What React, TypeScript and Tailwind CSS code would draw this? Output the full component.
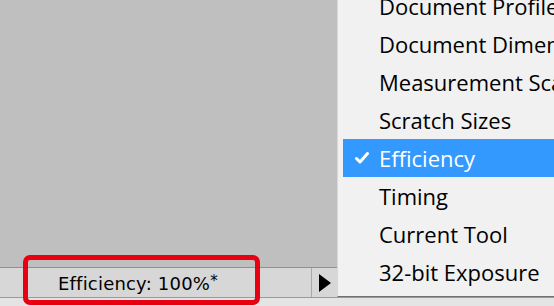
import React from "react";

const items = [
  "Document Profile",
  "Document Dimensions",
  "Measurement Scale",
  "Scratch Sizes",
  "Efficiency",
  "Timing",
  "Current Tool",
  "32-bit Exposure",
];

export default function App() {
  return (
    <div className="relative w-[554px] h-[306px] overflow-hidden bg-[#bfbfbf] flex flex-col">
      <div className="flex-1" />
      <div className="h-[30px] border-t border-[#8f8f8f] bg-[#d7d7d7] flex">
        <div
          className="w-[311px] shrink-0 flex items-center pl-[58px] pt-[1px] text-[18px] text-black tracking-[0.2px]"
          style={{ fontFamily: "'DejaVu Sans', sans-serif" }}
        >
          <span className="whitespace-nowrap">
            Efficiency: 100%<span className="text-[15px] relative -top-[4px]">*</span>
          </span>
        </div>
        <div className="w-[27px] shrink-0 border-l border-[#a9a9a9] flex items-center justify-center">
          <svg width="12" height="18" viewBox="0 0 12 18">
            <polygon points="0,0 12,9 0,18" fill="#000" />
          </svg>
        </div>
      </div>
      <div className="h-[9px] border-t border-[#9a9a9a] bg-[#e4e4e4]" />

      {/* popup menu */}
      <div className="absolute left-[337px] top-0 w-[240px] h-[297px] overflow-hidden bg-[#f1f1f1] border-l border-[#d9d9d9] border-b border-b-[#707070] pl-[5px]">
        <div className="-mt-[13px] flex flex-col">
          {items.map((t) => {
            const active = t === "Efficiency";
            return (
              <div
                key={t}
                className={`h-[38px] flex items-center whitespace-nowrap text-[22px] ${
                  active ? "bg-[#3399ff] text-white" : "text-black"
                }`}
                style={{ fontFamily: "'Open Sans', sans-serif" }}
              >
                <div className="w-[36px] shrink-0 flex justify-center pl-[2px]">
                  {active && (
                    <svg width="14" height="12" viewBox="0 0 14 12">
                      <path d="M1.5 6.5 L5 10 L12.5 1.5" stroke="#fff" strokeWidth="3" fill="none" strokeLinecap="round" strokeLinejoin="round" />
                    </svg>
                  )}
                </div>
                <span className="shrink-0 pt-[1px]">{t}</span>
              </div>
            );
          })}
        </div>
      </div>

      {/* red annotation */}
      <div className="absolute left-[23px] top-[255px] w-[237px] h-[50px] border-[5px] border-[#e60012] rounded-[7px]" />
    </div>
  );
}
